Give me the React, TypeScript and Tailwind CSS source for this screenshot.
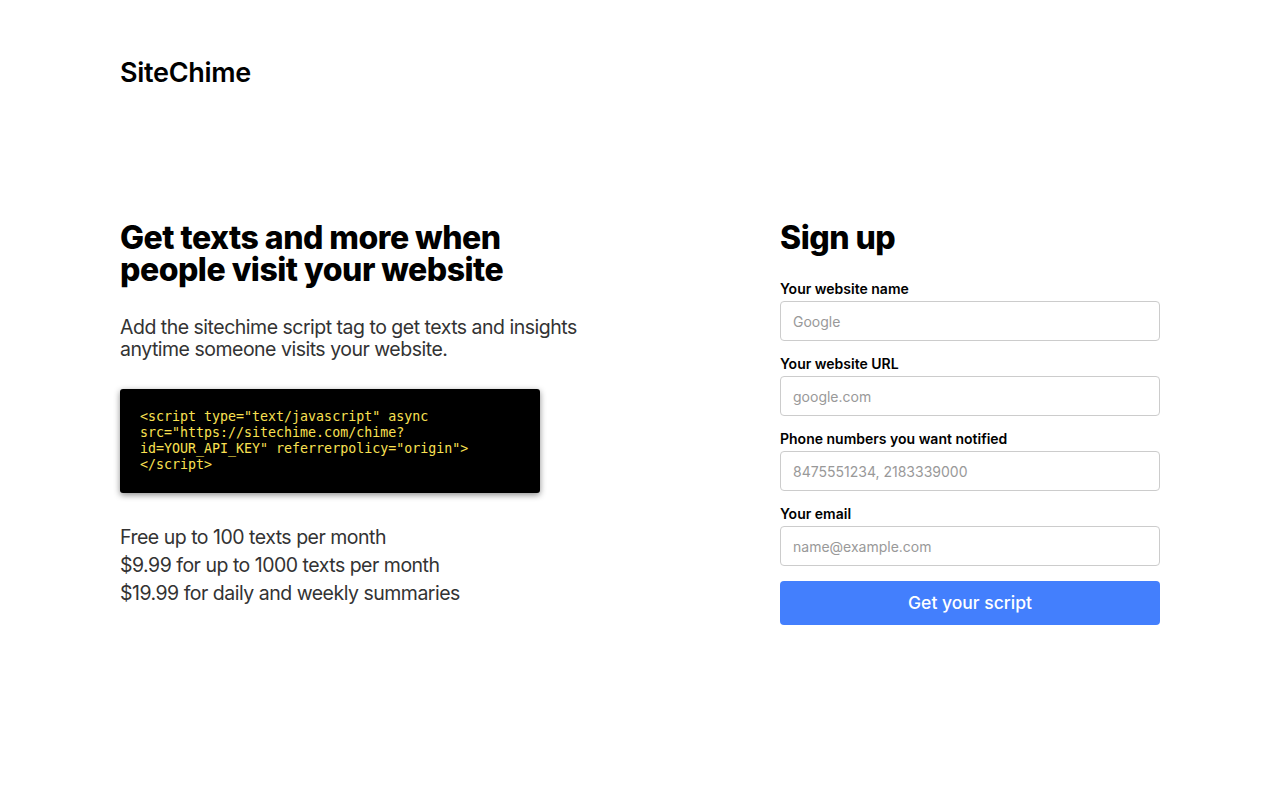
import React from "react";

const fields = [
  { label: "Your website name", placeholder: "Google" },
  { label: "Your website URL", placeholder: "google.com" },
  { label: "Phone numbers you want notified", placeholder: "8475551234, 2183339000" },
  { label: "Your email", placeholder: "name@example.com" },
];

const pricing = [
  "Free up to 100 texts per month",
  "$9.99 for up to 1000 texts per month",
  "$19.99 for daily and weekly summaries",
];

export default function App() {
  return (
    <div className="min-h-screen bg-white font-['Inter',sans-serif] text-black">
      <div className="mx-auto w-[1040px] pt-[56px]">
        {/* HEADER */}
        <h1 className="text-[27px] font-semibold leading-[34px] tracking-[-0.3px]">SiteChime</h1>

        <div className="mt-[132px] flex justify-between">
          {/* LEFT COLUMN */}
          <div className="w-[500px]">
            <h2 className="text-[32px] font-extrabold leading-[32px] tracking-[-0.5px]">
              Get texts and more when
              <br />
              people visit your website
            </h2>
            <p className="mt-[30px] text-[19.5px] leading-[22px] tracking-[-0.5px] text-[#333]">
              Add the sitechime script tag to get texts and insights
              <br />
              anytime someone visits your website.
            </p>

            <div className="mt-[29px] w-[420px] rounded-[3px] bg-black px-5 py-5 shadow-[0_2px_6px_rgba(0,0,0,0.45)]">
              <pre className="font-['DejaVu_Sans_Mono',monospace] text-[13.3px] leading-[16px] text-[#fae052] whitespace-pre">
                {`<script type="text/javascript" async
src="https://sitechime.com/chime?
id=YOUR_API_KEY" referrerpolicy="origin">
</script>`}
              </pre>
            </div>

            <div className="mt-[30px] text-[19.5px] leading-[28px] tracking-[-0.5px] text-[#333]">
              {pricing.map((line) => (
                <div key={line}>{line}</div>
              ))}
            </div>
          </div>

          {/* SIGN UP FORM */}
          <div className="w-[380px]">
            <h2 className="text-[32px] font-extrabold leading-[32px] tracking-[-0.5px]">Sign up</h2>
            <form className="mt-[26px] flex flex-col">
              {fields.map((f) => (
                <div key={f.label} className="mb-[14px]">
                  <label className="block text-[14px] font-semibold leading-[17px]">{f.label}</label>
                  <input
                    placeholder={f.placeholder}
                    className="mt-[4px] h-[40px] w-full rounded-[4px] border border-[#ccc] px-[12px] text-[14px] placeholder:text-[#999] outline-none"
                  />
                </div>
              ))}
              <button
                type="button"
                className="mt-[1px] h-[44px] w-full rounded-[4px] bg-[#437ffd] text-[17.5px] font-medium text-white"
              >
                Get your script
              </button>
            </form>
          </div>
        </div>
      </div>
    </div>
  );
}
